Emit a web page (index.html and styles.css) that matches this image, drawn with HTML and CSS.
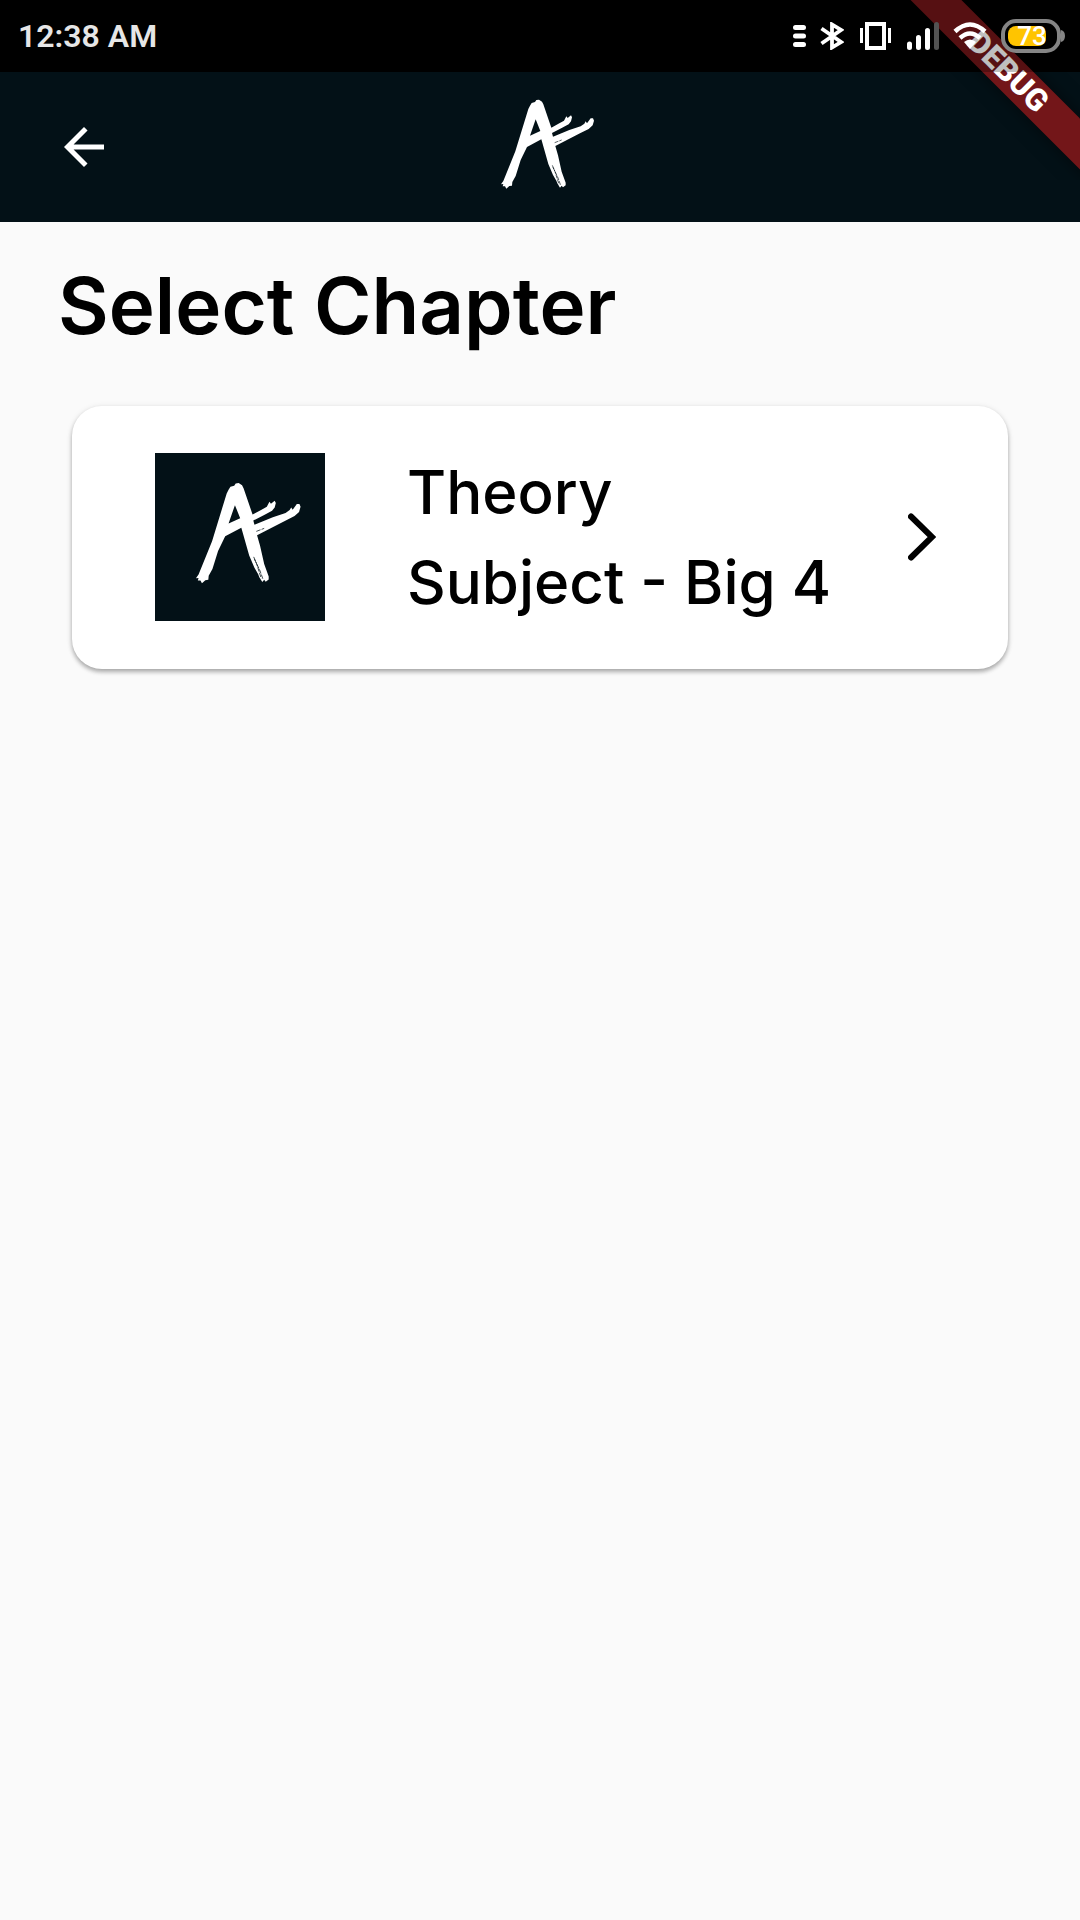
FILE: index.html
```html
<!DOCTYPE html>
<html lang="en">
<head>
<meta charset="utf-8">
<meta name="viewport" content="width=device-width, initial-scale=1">
<title>Select Chapter</title>
<link rel="stylesheet" href="styles.css">
</head>
<body>
<svg class="defs" width="0" height="0" aria-hidden="true">
  <defs>
    <g id="brush-a">
      <path fill="#fff" d="M63 313L70 303L106 214L145 87L150 77L155 69L165 66L169 60L177 59L186 65L190 73L214 143L238 130L252 122L259 109L263 114L273 106L276 112L273 124L266 133L245 144L216 159L219 170L268 150L302 139L313 131L317 124L321 130L332 115L339 115L342 122L338 136L326 147L300 160L226 198L234 226L245 275L257 308L257 316L249 322L245 317L240 323L232 310L229 302L219 285L205 252L184 178L141 201L122 240L107 288L97 306L96 317L88 318L79 326L75 319L68 319L70 312ZM167 118L150 167L181 153Z"/>
      <path fill="none" stroke="#031117" stroke-width="2" stroke-dasharray="12 3" d="M224 188L245 180M217 256L225 275L237 313M219 262L233 291L242 316"/>
    </g>
  </defs>
</svg>

<div class="status-bar">
  <time class="clock">12:38 AM</time>
  <div class="status-icons">
    <svg width="13" height="22" viewBox="0 0 13 22" aria-hidden="true"><path stroke="#fff" stroke-width="5" stroke-linecap="round" d="M2.500 2.500H10.500M2.500 11H10.500M2.500 19.500H10.500"/></svg>
    <svg class="bluetooth" width="24" height="28" viewBox="0 0 24 28" aria-hidden="true"><path fill="none" stroke="#fff" stroke-width="3.800" d="M1.500 6.500L21 20L12 25.500V2.500L21 8L1.500 21.500"/></svg>
    <svg class="vibrate" width="31" height="28" viewBox="0 0 31 28" aria-hidden="true"><path fill="none" stroke="#fff" stroke-width="4" d="M7 2H24V26H7Z"/><path stroke="#fff" stroke-width="3" d="M1.500 6V21M29.500 6V21"/></svg>
    <svg class="signal" width="32" height="28" viewBox="0 0 32 28" aria-hidden="true"><path stroke="#fff" stroke-width="5" stroke-linecap="round" d="M2.500 22V25.500M11.500 15.500V25.500M20.500 8.500V25.500"/><path stroke="#525252" stroke-width="5" stroke-linecap="round" d="M29.500 2.500V25.500"/></svg>
    <svg class="wifi" width="34" height="28" viewBox="0 0 34 28" aria-hidden="true"><g fill="none" stroke="#fff" stroke-width="4.500"><path d="M2 9.500Q17 -4.500 32 9.500"/><path d="M7 16Q17 7 27 16"/></g><path fill="#fff" d="M11 20Q17 15 23 20L17 27Z"/></svg>
    <div class="battery">
      <svg width="64" height="34" viewBox="0 0 64 34" aria-hidden="true"><rect x="2" y="2" width="56" height="30" rx="13" fill="none" stroke="#858585" stroke-width="4"/><path fill="#858585" d="M60 11Q64 12 64 17T60 23Z"/><rect x="7" y="7" width="38" height="20" rx="8" fill="#ffc400"/></svg>
      <span class="battery-level">73</span>
    </div>
  </div>
</div>

<div class="debug-banner"><span class="debug-ribbon">DEBUG</span></div>

<header class="app-bar">
  <button class="back" type="button" aria-label="Back">
    <svg width="60" height="60" viewBox="0 0 24 24" aria-hidden="true"><path fill="#fff" d="M20 11H7.830l5.590-5.590L12 4l-8 8 8 8 1.410-1.410L7.830 13H20v-2z"/></svg>
  </button>
  <svg class="brand" width="110" height="100" viewBox="15 51 330 300" aria-hidden="true"><use href="#brush-a"/></svg>
</header>

<main>
  <h1>Select Chapter</h1>
  <a class="chapter" href="#theory">
    <svg class="thumb" width="170" height="168" viewBox="-46 -21 453 448" aria-hidden="true"><use href="#brush-a"/></svg>
    <span class="chapter-name">Theory<br>Subject - Big 4</span>
    <svg class="chevron" width="28" height="48" viewBox="0 0 28 48" aria-hidden="true"><path fill="none" stroke="#000" stroke-width="6" stroke-linecap="round" d="M3 3.500L24 24L3 44.500"/></svg>
  </a>
</main>
</body>
</html>
```

FILE: styles.css
```css
* {
  box-sizing: border-box;
}

body {
  margin: 0;
  min-height: 100vh;
  position: relative;
  background: #fafafa;
  color: #000;
  font-family: Inter, sans-serif;
}

svg {
  display: block;
  flex: none;
}

.defs {
  position: absolute;
}

.status-bar {
  display: flex;
  justify-content: space-between;
  align-items: center;
  height: 72px;
  padding: 0 15px 0 18px;
  background: #000;
  font-family: Roboto, sans-serif;
}

.clock {
  color: #e6e6e6;
  font-size: 32px;
  font-weight: 600;
}

.status-icons {
  position: relative;
  z-index: 2;
  display: flex;
  align-items: center;
  gap: 14px;
}

.vibrate,
.signal {
  margin-left: 2px;
}

.battery {
  display: grid;
  place-items: center;
}

.battery > * {
  grid-area: 1 / 1;
}

.battery-level {
  padding-right: 2px;
  color: #fff;
  font-size: 26px;
  font-weight: 500;
  line-height: 34px;
}

.debug-banner {
  position: absolute;
  top: 0;
  right: 0;
  z-index: 1;
  width: 180px;
  height: 180px;
  overflow: hidden;
  pointer-events: none;
}

/* Status bar scrim over the ribbon */
.debug-banner::after {
  content: "";
  position: absolute;
  inset: 0 0 auto;
  height: 72px;
  background: rgba(0, 0, 0, 0.25);
}

.debug-ribbon {
  position: absolute;
  top: 54px;
  right: -68px;
  width: 280px;
  background: #731619;
  box-shadow: 0 0 18px rgba(0, 0, 0, 0.5);
  color: #fff;
  font: 900 31px/36px Roboto, sans-serif;
  text-align: center;
  transform: rotate(45deg);
}

.app-bar {
  display: grid;
  grid-template-columns: 1fr auto 1fr;
  align-items: center;
  height: 150px;
  padding: 0 54px;
  background: #031117;
}

.back {
  justify-self: start;
  padding: 0;
  border: 0;
  background: none;
  cursor: pointer;
}

main {
  padding: 24px 72px;
}

h1 {
  margin: 0 -14px 40px;
  font-size: 78px;
  font-weight: 600;
  line-height: 120px;
}

.chapter {
  display: flex;
  align-items: center;
  min-height: 263px;
  padding: 0 72px 2px 83px;
  border-radius: 30px;
  background: #fff;
  box-shadow: 0 3px 4px rgba(0, 0, 0, 0.28), 0 1px 6px rgba(0, 0, 0, 0.1);
  color: inherit;
  text-decoration: none;
}

.thumb {
  background: #031117;
}

.chapter-name {
  flex: 1;
  margin-left: 82px;
  font-size: 60px;
  font-weight: 500;
  line-height: 90px;
}
```
